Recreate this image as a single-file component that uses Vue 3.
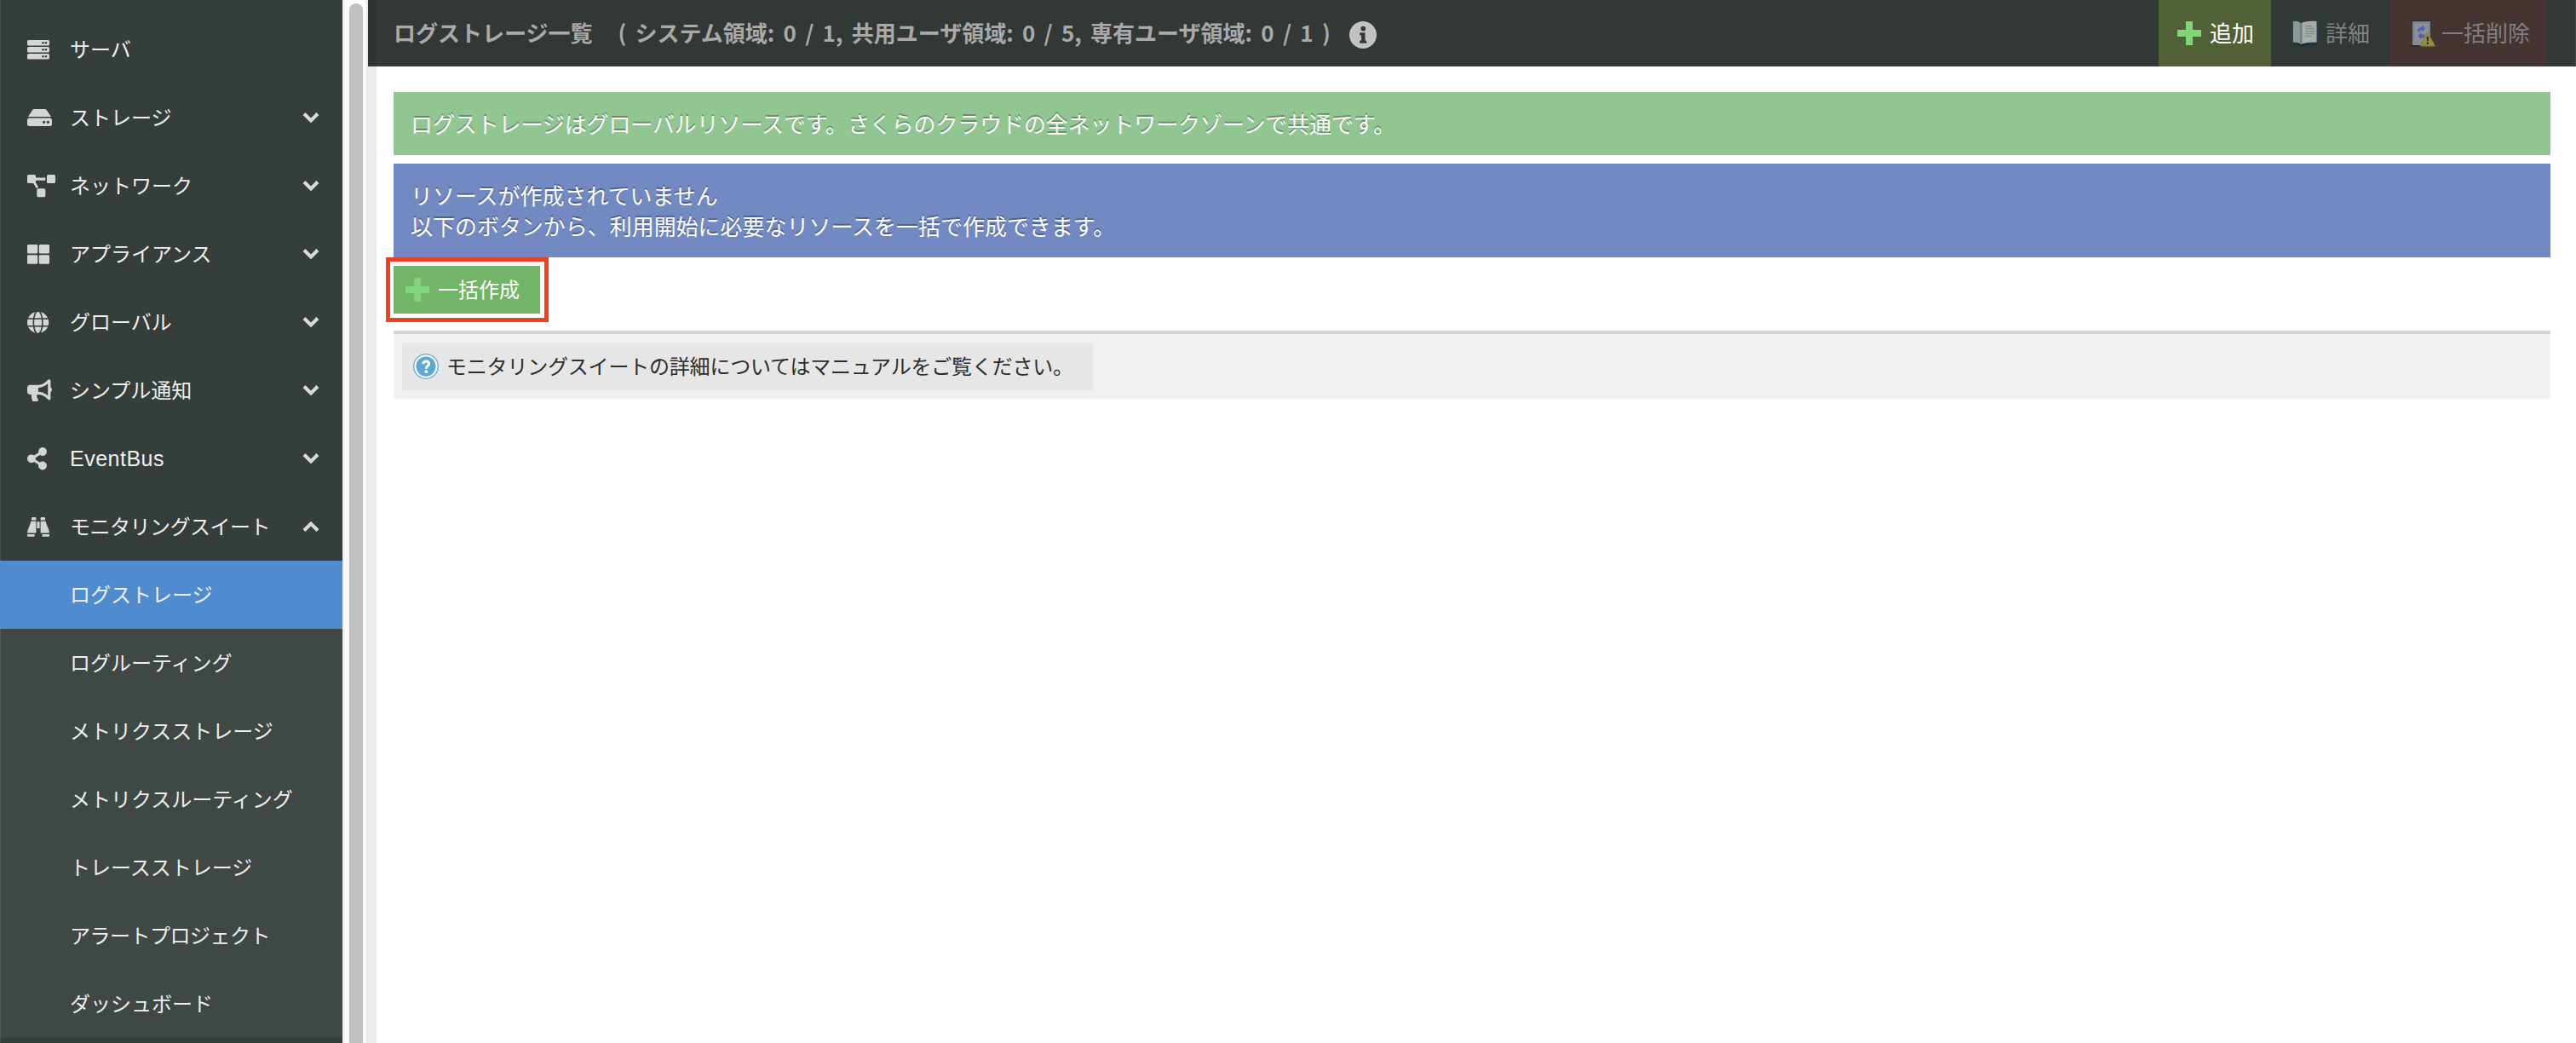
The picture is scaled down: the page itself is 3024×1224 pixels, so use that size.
<script setup>
const menu = [
  { icon: 'server', label: 'サーバ' },
  { icon: 'disk', label: 'ストレージ', arrow: 'down' },
  { icon: 'network', label: 'ネットワーク', arrow: 'down' },
  { icon: 'grid', label: 'アプライアンス', arrow: 'down' },
  { icon: 'globe', label: 'グローバル', arrow: 'down' },
  { icon: 'horn', label: 'シンプル通知', arrow: 'down' },
  { icon: 'share', label: 'EventBus', arrow: 'down', latin: true },
  { icon: 'binoculars', label: 'モニタリングスイート', arrow: 'up', tight: true },
]
const submenu = [
  { label: 'ログストレージ', active: true },
  { label: 'ログルーティング' },
  { label: 'メトリクスストレージ' },
  { label: 'メトリクスルーティング' },
  { label: 'トレースストレージ' },
  { label: 'アラートプロジェクト', tight: true },
  { label: 'ダッシュボード' },
]
</script>

<template>
  <div class="page">
    <nav class="sidebar">
      <a v-for="m in menu" :key="m.label" class="item">
        <svg class="item-icon" width="36" height="32" viewBox="0 0 36 32">
          <g v-if="m.icon === 'server'">
            <rect y="5" width="26" height="6.4" rx="1.5" />
            <rect y="13" width="26" height="6.4" rx="1.5" />
            <rect y="21" width="26" height="6.6" rx="1.5" />
            <g class="hole">
              <circle cx="18.6" cy="8.2" r="1.2" /><circle cx="22" cy="8.2" r="1.2" />
              <circle cx="18.6" cy="16.2" r="1.2" /><circle cx="22" cy="16.2" r="1.2" />
              <circle cx="18.6" cy="24.2" r="1.2" /><circle cx="22" cy="24.2" r="1.2" />
            </g>
          </g>
          <g v-else-if="m.icon === 'disk'">
            <path d="M8 6h12.500q1.500 0 2.300 1.200L28 15H1L6 7.200Q6.700 6 8 6z" />
            <rect y="16.600" width="29" height="9.400" rx="2.500" />
            <g class="hole"><circle cx="19.600" cy="21.300" r="1.600" /><circle cx="24.400" cy="21.300" r="1.600" /></g>
          </g>
          <g v-else-if="m.icon === 'network'">
            <rect y="3" width="10" height="10" rx="1.600" />
            <rect x="23" y="3" width="10" height="10" rx="1.600" />
            <rect x="11.300" y="19.300" width="10" height="10" rx="1.600" />
            <path d="M10 6.600h11.300v3.200H10zM6.400 12l2.600-1.500 4 7-2 1.700z" />
          </g>
          <g v-else-if="m.icon === 'grid'">
            <rect y="5" width="12.200" height="10.400" rx="1.300" />
            <rect x="13.800" y="5" width="12.200" height="10.400" rx="1.300" />
            <rect y="17.200" width="12.200" height="10.600" rx="1.300" />
            <rect x="13.800" y="17.200" width="12.200" height="10.600" rx="1.300" />
          </g>
          <g v-else-if="m.icon === 'globe'">
            <circle cx="12.600" cy="16.400" r="12.600" />
            <g class="line">
              <ellipse cx="12.600" cy="16.400" rx="5.300" ry="13.400" />
              <path d="M0 12h25.200M0 20.800h25.200" />
            </g>
          </g>
          <g v-else-if="m.icon === 'horn'" transform="translate(0 3.200) scale(.0504)">
            <path d="M576 240c0-23.63-12.950-44.040-32-55.120V32.010C544 23.260 537.020 0 512 0c-7.120 0-14.190 2.380-19.980 7.020l-85.030 68.030C364.280 109.190 310.660 128 256 128H64c-35.350 0-64 28.650-64 64v96c0 35.350 28.650 64 64 64h33.700c-1.390 10.480-2.180 21.140-2.180 32 0 39.770 9.260 77.350 25.560 110.940 5.190 10.690 16.520 17.060 28.400 17.060h74.280c26.050 0 41.690-29.840 25.900-50.560-16.400-21.520-26.150-48.360-26.150-77.440 0-11.110 1.620-21.790 4.410-32H256c54.660 0 108.280 18.810 150.980 52.950l85.030 68.030a32.020 32.020 0 0 0 19.980 7.020c24.920 0 32-22.780 32-32V295.130C563.050 284.040 576 263.630 576 240zm-96 141.420l-33.050-26.440C392.950 311.780 325.120 288 256 288v-96c69.120 0 136.950-23.780 190.950-66.980L480 98.580v282.840z" />
          </g>
          <g v-else-if="m.icon === 'share'">
            <circle cx="18" cy="8" r="4.900" /><circle cx="4.900" cy="16.300" r="4.900" /><circle cx="18" cy="24.500" r="4.900" />
            <path d="M18 8L5 16.300l13 8.200" fill="none" stroke="#d3d6d5" stroke-width="3.200" />
          </g>
          <g v-else>
            <path d="M6 5h3.400q1 0 1 1v2.500H5V6q0-1 1-1zM16.600 5H20q1 0 1 1v2.500h-5.400V6q0-1 1-1zM4.300 9.800h6.100V23.500H.100Q.200 20 2 16.500 3.700 13 4.300 9.800zM15.600 9.800h6.100q.600 3.200 2.300 6.700 1.800 3.500 1.900 7H15.600zM11.400 10.200h3.200V18h-3.200zM0 25h8.600v1.700q0 1-1 1H1q-1 0-1-1zM17.400 25H26v1.700q0 1-1 1h-6.600q-1 0-1-1z" />
          </g>
        </svg>
        <span class="label" :class="{ latin: m.latin, tight: m.tight }">{{ m.label }}</span>
        <svg v-if="m.arrow" class="chevron" :class="m.arrow" width="20" height="14" viewBox="0 0 20 14">
          <path d="M2 2.600l8 7.800 8-7.800" fill="none" stroke="#d9dbda" stroke-width="4.200" />
        </svg>
      </a>
      <div class="submenu">
        <a v-for="s in submenu" :key="s.label" class="item sub" :class="{ active: s.active }">
          <span class="label" :class="{ tight: s.tight }">{{ s.label }}</span>
        </a>
      </div>
    </nav>

    <div class="scroll"><div class="thumb"></div></div>
    <div class="gutter"><div class="gutter-top"></div></div>

    <main class="main">
      <header class="header">
        <h1 class="title">
          <span class="t-name">ログストレージ一覧</span>
          <span class="t-count">( システム領域: 0 / 1, 共用ユーザ領域: 0 / 5, 専有ユーザ領域: 0 / 1 )</span>
          <svg class="info" width="32" height="32" viewBox="0 0 32 32">
            <circle cx="16" cy="16" r="16" fill="#c2c2c2" />
            <circle cx="16.300" cy="8.600" r="2.900" fill="#313836" />
            <path d="M12.300 13.300h6.200v9.200h1.700v3.200h-8v-3.200h1.900v-6h-1.800z" fill="#313836" />
          </svg>
        </h1>
        <div class="actions">
          <a class="action add">
            <svg width="28" height="28" viewBox="0 0 28 28"><path d="M10 0h8v10h10v8H18v10h-8V18H0v-8h10z" fill="#7fd578" /></svg>
            <span>追加</span>
          </a>
          <a class="action detail">
            <svg width="32" height="32" viewBox="0 0 32 32">
              <path d="M1 27q7-1.500 10 2.500Q17 27 31 28v1q-12 0-20 2.500Q7 28 1 29z" fill="#222927" />
              <path d="M.500 2h30.500v26H.500z" fill="#2d4254" />
              <path d="M2 2q6-1 9 2.500v24.500Q8 26 2 26.500z" fill="#8d9896" />
              <path d="M11 4.500Q17 1 29.500 2v24.500Q17 26 11 29z" fill="#a5aeab" />
              <path d="M10 4q1.500 1.500 2.500 0v24l-1.500 1-1-1z" fill="#6f7b79" />
              <path d="M16 7.500h8M16 10.500h11M16 13.500h12M16 16.500h11M16 19.500h8" stroke="#84908d" stroke-width="1.400" />
            </svg>
            <span>詳細</span>
          </a>
          <a class="action remove">
            <svg width="32" height="32" viewBox="0 0 32 32">
              <path d="M3 1h22v2H3zM1 29.500h16v2H1z" fill="#2d2423" />
              <path d="M4 2h21v28H4z" fill="#77818f" />
              <path d="M6 4h17v22H6z" fill="#8a8f98" />
              <path d="M4 27h21v3H4z" fill="#8d8d90" />
              <path d="M10 13q0-4 5-4V6.500l4 4-4 4V12q-2 0-2.500 3zM14.500 15v2.500H18V21h-3.500v2.500L10.500 19.300z" fill="#4f62ae" />
              <path d="M21.700 15L30.500 31H13z" fill="#928f45" stroke="#7d7c3c" stroke-linejoin="round" />
              <path d="M20.500 20h2.600l-.500 5.500h-1.600zM20.600 26.700h2.400V29h-2.400z" fill="#302f28" />
            </svg>
            <span>一括削除</span>
          </a>
        </div>
      </header>

      <section class="content">
        <p class="notice green">ログストレージはグローバルリソースです。さくらのクラウドの全ネットワークゾーンで共通です。</p>
        <p class="notice blue">リソースが作成されていません<br />以下のボタンから、利用開始に必要なリソースを一括で作成できます。</p>
        <div class="create-row">
          <a class="create">
            <svg width="28" height="28" viewBox="0 0 28 28"><path d="M10 0h8v10h10v8H18v10h-8V18H0v-8h10z" fill="#7fd578" /></svg>
            <span>一括作成</span>
            <i class="highlight"></i>
          </a>
        </div>
        <div class="help-panel">
          <a class="help">
            <svg width="30" height="30" viewBox="0 0 30 30">
              <circle cx="15" cy="15" r="14.300" fill="#fff" stroke="#5fa8d6" stroke-width="1.300" />
              <circle cx="15" cy="15" r="11.500" fill="#5fa8d3" />
              <path d="M11.700 12.200Q11.800 8.900 15.200 8.900T18.600 11.900Q18.600 13.500 16.800 14.600 15.400 15.500 15.400 17.800" fill="none" stroke="#fff" stroke-width="3" />
              <circle cx="15.400" cy="21.200" r="1.900" fill="#fff" />
            </svg>
            <span class="help-text">モニタリングスイートの詳細についてはマニュアルをご覧ください。</span>
          </a>
        </div>
      </section>
    </main>
  </div>
</template>

<style>
body {
  overflow: hidden;
  background: #fff;
}
</style>

<style scoped>
.page {
  display: flex;
  height: 1224px;
  overflow: hidden;
  font-family: 'Noto Sans CJK JP', sans-serif;
  box-sizing: border-box;
}
.page * {
  box-sizing: border-box;
}
.sidebar {
  width: 402px;
  flex: none;
  padding-top: 18px;
  background: #363e3b;
  box-shadow: inset 1px 0 0 #4a514f;
}
.item {
  display: flex;
  align-items: center;
  height: 80px;
  padding: 0 27px 0 32px;
  font-size: 24px;
  line-height: 36px;
  color: #efefef;
  white-space: nowrap;
}
.item-icon {
  flex: none;
  margin-right: 14px;
  fill: #d3d6d5;
}
.label {
  padding-bottom: 3px;
}
.hole {
  fill: #363e3b;
}
.line {
  fill: none;
  stroke: #363e3b;
  stroke-width: 1.6;
}
.latin {
  padding-bottom: 0;
  font-family: 'Liberation Sans', sans-serif;
  font-size: 25px;
  letter-spacing: 0.5px;
}
.tight {
  letter-spacing: -0.5px;
}
.chevron {
  margin-left: auto;
}
.chevron.up {
  transform: rotate(180deg);
}
.submenu {
  background: #404845;
  box-shadow: inset 1px 0 0 #535a58;
}
.sub {
  padding-left: 82px;
}
.sub.active {
  background: #508bcf;
}
.scroll {
  width: 28px;
  flex: none;
  padding: 4px 4px 0 6px;
  border-left: 2px solid #ebebeb;
  background: #fafafa;
}
.thumb {
  height: 1240px;
  border-radius: 8px 8px 0 0;
  background: #c1c1c1;
}
.gutter {
  width: 12px;
  flex: none;
  padding-left: 2px;
  background: #ebebeb;
}
.gutter-top {
  height: 78px;
  background: #2d3431;
}
.main {
  flex: 1;
  min-width: 0;
}
.header {
  display: flex;
  justify-content: space-between;
  height: 78px;
  padding-right: 34px;
  background: #313836;
  box-shadow: inset -1px 0 0 #454b49;
}
.title {
  display: flex;
  align-items: center;
  margin: 0;
  padding-left: 20px;
  font-size: 26px;
  font-weight: 700;
  line-height: 36px;
  color: #aaa8a8;
  white-space: pre;
}
.t-name,
.t-count {
  padding-bottom: 3px;
}
.t-count {
  margin-left: 30px;
  word-spacing: 4.4px;
}
.info {
  margin: 3px 0 0 22px;
}
.actions {
  display: flex;
}
.action {
  display: flex;
  align-items: center;
  font-size: 26px;
  line-height: 36px;
  color: #fff;
  white-space: nowrap;
}
.action svg {
  flex: none;
  margin-bottom: 1px;
}
.action span {
  padding-bottom: 3px;
}
.add {
  width: 132px;
  padding-left: 22px;
  gap: 10px;
  background: #526038;
}
.detail {
  width: 140px;
  padding-left: 24px;
  gap: 8px;
  color: #7f8482;
}
.remove {
  width: 184px;
  padding-left: 22px;
  gap: 6px;
  color: #7f8080;
  background: #463432;
}
.content {
  padding: 30px 30px 0 20px;
}
.notice {
  margin: 0 0 10px;
  padding: 19px 20px;
  font-size: 26px;
  line-height: 36px;
  color: #fff;
  text-shadow: 0 -2px 0 rgba(0, 0, 0, 0.3);
}
.green {
  letter-spacing: -0.12px;
  background: #91c693;
}
.blue {
  letter-spacing: -0.03px;
  background: #7289c1;
}
.create-row {
  display: flex;
  height: 76px;
}
.create {
  position: relative;
  display: flex;
  align-items: center;
  gap: 10px;
  width: 172px;
  height: 56px;
  padding-left: 14px;
  font-size: 24px;
  line-height: 36px;
  color: #fff;
  background: #72b569;
}
.create span {
  padding-bottom: 3px;
}
.highlight {
  position: absolute;
  inset: -10px -10px -10px -9px;
  border: 5px solid #eb4226;
}
.help-panel {
  height: 80px;
  padding: 10px;
  border-top: 4px solid #d6d6d6;
  background: #f1f1f1;
}
.help {
  display: flex;
  align-items: center;
  width: 811px;
  height: 56px;
  padding-left: 13px;
  font-size: 24px;
  line-height: 36px;
  color: #2d2d2d;
  white-space: nowrap;
  background: #e6e6e6;
}
.help-text {
  margin-left: 9px;
  padding-bottom: 3px;
  letter-spacing: -0.2px;
}
</style>
